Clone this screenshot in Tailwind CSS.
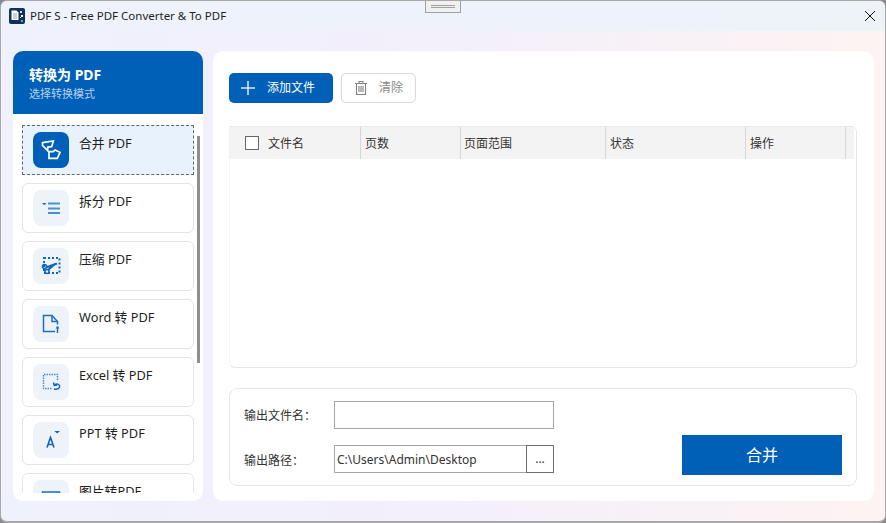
<!DOCTYPE html>
<html lang="en">
<head>
    <meta charset="UTF-8">
    <title>PDF S - Free PDF Converter &amp; To PDF</title>
    <script src="https://cdn.jsdelivr.net/npm/@tailwindcss/browser@4"></script>
</head>
<body class="w-[886px] h-[523px] overflow-hidden bg-[#8a8a8a] font-['Noto_Sans','Noto_Sans_CJK_SC',sans-serif] text-[#1f1f1f]">
<div class="relative w-[886px] h-[523px] flex flex-col overflow-hidden rounded-[7px] border border-[#a8a8a8] border-b-2 bg-gradient-to-r from-[#eff1fd] via-[#f3effb] to-[#fdf3f2]">

    <!-- Title bar -->
    <header class="h-[30px] flex items-center shrink-0 pl-[8px] pr-[10px] bg-gradient-to-r from-[#eef2fc] to-[#eef3f8]">
        <svg width="16" height="16" viewBox="0 0 16 16" class="mr-[5px]">
            <rect width="16" height="16" rx="2" fill="#12305c"/>
            <path d="M2.500 2.500h5l2 2V12h-7z" fill="#fff"/>
            <path d="M4 6h4M4 8h4M4 10h4" stroke="#8fa6c4" stroke-width="1"/>
            <rect x="11" y="3" width="2" height="2" fill="#cfe0f2"/>
            <rect x="12" y="7" width="2" height="2" fill="#fff"/>
            <rect x="11" y="9" width="1" height="1" fill="#cfe0f2"/>
            <rect x="12" y="12" width="2" height="2" fill="#54c27a"/>
        </svg>
        <span class="text-[11.500px] leading-none whitespace-nowrap">PDF S - Free PDF Converter &amp; To PDF</span>
        <svg width="10" height="10" viewBox="0 0 10 10" class="ml-auto" fill="none" stroke="#111" stroke-width="1"><path d="M0 0l10 10M10 0L0 10"/></svg>
    </header>

    <!-- Window handle -->
    <div class="absolute left-[424px] top-0 w-[36px] h-[12px] bg-[#f0f0f0] border border-t-0 border-[#a0a0a0] flex flex-col items-center justify-center gap-[1px]">
        <div class="w-[24px] h-px bg-[#a0a0a0]"></div>
        <div class="w-[24px] h-px bg-[#a0a0a0]"></div>
    </div>

    <div class="flex gap-[10px] pl-[12px] pt-[20px]">
        <!-- Sidebar -->
        <aside class="w-[190px] h-[450px] rounded-[10px] bg-white overflow-hidden shrink-0 pb-[8px] flex flex-col">
            <div class="h-[63px] shrink-0 bg-[#0060b8] pl-[16px] pt-[14px] text-white">
                <div class="text-[14px] leading-[20px] font-bold">转换为 PDF</div>
                <div class="text-[11px] leading-[17px] text-[#b4d0ec]">选择转换模式</div>
            </div>
            <div class="relative flex-1 overflow-hidden pt-[11px] pl-[9px] flex flex-col gap-[8px]">
                <div class="absolute left-[184px] top-[22px] w-[3px] h-[227px] bg-[#8f8f8f]"></div>

                <div class="w-[172px] h-[50px] shrink-0 flex gap-[10px] pl-[10px] pt-[6px] border border-dashed border-[#666] bg-[#e8f2fd]">
                    <div class="w-[36px] h-[36px] rounded-[8px] bg-[#0060b8] flex items-center justify-center">
                        <svg width="36" height="36" viewBox="0 0 36 36" fill="none" stroke="#fff" stroke-width="1.700">
                            <path d="M9.500 10.700L20.300 9 18.700 14.700 14.700 15V18.700L9.500 13.500z"/>
                            <path d="M16 19.700H20.300L22 18 27 20.300 24.300 26.300H16z"/>
                        </svg>
                    </div>
                    <div class="text-[12.800px] leading-[18px] mt-[2px] whitespace-nowrap">合并 PDF</div>
                </div>

                <div class="w-[172px] h-[50px] shrink-0 flex gap-[10px] pl-[10px] pt-[6px] border border-[#e4e4e4] rounded-[6px]">
                    <div class="w-[36px] h-[36px] rounded-[8px] bg-[#eef3fa] flex items-center justify-center">
                        <svg width="36" height="36" viewBox="0 0 36 36" fill="none" stroke="#4a8fd4" stroke-width="1.800">
                            <path d="M15 13.500h12M15 18.500h12M15 23h12"/>
                            <path d="M9 13h4.500l-2.200 2.300z" fill="#1b6fc2" stroke="none"/>
                        </svg>
                    </div>
                    <div class="text-[12.800px] leading-[18px] mt-[2px] whitespace-nowrap">拆分 PDF</div>
                </div>

                <div class="w-[172px] h-[50px] shrink-0 flex gap-[10px] pl-[10px] pt-[6px] border border-[#e4e4e4] rounded-[6px]">
                    <div class="w-[36px] h-[36px] rounded-[8px] bg-[#eef3fa] flex items-center justify-center">
                        <svg width="36" height="36" viewBox="0 0 36 36" fill="none" stroke="#0f67bd" stroke-width="2">
                            <rect x="11" y="10" width="15.500" height="15" stroke-dasharray="2 2"/>
                            <circle cx="11.500" cy="18.500" r="2" stroke-width="1.600"/>
                            <circle cx="14" cy="23.500" r="2" stroke-width="1.600"/>
                            <path d="M13 19.500l11-4M15 22l7-6" stroke-width="2"/>
                        </svg>
                    </div>
                    <div class="text-[12.800px] leading-[18px] mt-[2px] whitespace-nowrap">压缩 PDF</div>
                </div>

                <div class="w-[172px] h-[50px] shrink-0 flex gap-[10px] pl-[10px] pt-[6px] border border-[#e4e4e4] rounded-[6px]">
                    <div class="w-[36px] h-[36px] rounded-[8px] bg-[#eef3fa] flex items-center justify-center">
                        <svg width="36" height="36" viewBox="0 0 36 36" fill="none" stroke="#1b6fc2" stroke-width="1.500">
                            <path d="M22 25.500H10.500V9.500h8.500l5.500 6v3"/>
                            <path d="M19 9.500v6h5.500"/>
                            <path d="M24.500 27v-6.500" stroke-width="1.500"/>
                            <path d="M22.500 22.500h4l-2-2.500z" fill="#1b6fc2" stroke="none"/>
                        </svg>
                    </div>
                    <div class="text-[12.800px] leading-[18px] mt-[2px] whitespace-nowrap">Word 转 PDF</div>
                </div>

                <div class="w-[172px] h-[50px] shrink-0 flex gap-[10px] pl-[10px] pt-[6px] border border-[#e4e4e4] rounded-[6px]">
                    <div class="w-[36px] h-[36px] rounded-[8px] bg-[#eef3fa] flex items-center justify-center">
                        <svg width="36" height="36" viewBox="0 0 36 36" fill="none" stroke="#4a8fd4" stroke-width="1.500">
                            <path d="M24.500 16V10.500H10.500V24.500H19" stroke-dasharray="1.500 1"/>
                            <path d="M21 25c3.500.8 6-.8 5.600-3-.4-2-2.800-2.600-4.600-1.300M20.500 18.500l.7 3 3-.5" stroke="#0f67bd" stroke-width="1.500"/>
                        </svg>
                    </div>
                    <div class="text-[12.800px] leading-[18px] mt-[2px] whitespace-nowrap">Excel 转 PDF</div>
                </div>

                <div class="w-[172px] h-[50px] shrink-0 flex gap-[10px] pl-[10px] pt-[6px] border border-[#e4e4e4] rounded-[6px]">
                    <div class="w-[36px] h-[36px] rounded-[8px] bg-[#eef3fa] flex items-center justify-center">
                        <svg width="36" height="36" viewBox="0 0 36 36" fill="none" stroke="#0f67bd" stroke-width="1.600">
                            <path d="M14 25.500l3.500-10 3.500 10M15 22.500h5"/>
                            <path d="M21.300 9h5.700l-2.800 2.500z" fill="#0f67bd" stroke="none"/>
                        </svg>
                    </div>
                    <div class="text-[12.800px] leading-[18px] mt-[2px] whitespace-nowrap">PPT 转 PDF</div>
                </div>

                <div class="w-[172px] h-[50px] shrink-0 flex gap-[10px] pl-[10px] pt-[6px] border border-[#e4e4e4] rounded-[6px]">
                    <div class="w-[36px] h-[36px] rounded-[8px] bg-[#eef3fa] flex items-center justify-center">
                        <svg width="36" height="36" viewBox="0 0 36 36" fill="none" stroke="#1b6fc2" stroke-width="1.500"><rect x="9.500" y="12" width="17" height="14"/></svg>
                    </div>
                    <div class="text-[12.800px] leading-[18px] mt-[2px] whitespace-nowrap">图片转PDF</div>
                </div>
            </div>
        </aside>

        <!-- Main panel -->
        <main class="w-[661px] h-[450px] rounded-[10px] bg-white shrink-0 pl-[16px] pt-[22px]">
            <div class="flex gap-[8px]">
                <button class="w-[104px] h-[30px] rounded-[5px] bg-[#0060b8] text-white text-[12px] flex items-center pl-[12px] gap-[12px]">
                    <svg width="14" height="14" viewBox="0 0 14 14" fill="none" stroke="#dce9f6" stroke-width="1.500"><path d="M7 0v14M0 7h14"/></svg>
                    添加文件
                </button>
                <button class="w-[75px] h-[30px] rounded-[5px] border border-[#d9d9d9] text-[#8b8b8b] text-[12px] flex items-center pl-[13px] gap-[12px]">
                    <svg width="12" height="14" viewBox="0 0 12 14" fill="none" stroke="#808080" stroke-width="1.100"><path d="M0 2.500h12M4 2.500V.5h4v2M1.500 2.500v11h9v-11M4 5v6M6 5v6M8 5v6"/></svg>
                    清除
                </button>
            </div>

            <!-- File table -->
            <div class="mt-[23px] w-[628px] h-[242px] rounded-[6px] border-l border-r border-b border-l-[#f4f4f4] border-r-[#e6e6e6] border-b-[#e6e6e6]">
                <div class="h-[33px] bg-[#f3f3f3] border-t border-[#e8e8e8] flex text-[12px] text-[#333] leading-[34px] mr-[2px] -ml-px">
                    <div class="w-[132px] border-r border-[#d6d6d6] flex items-center pl-[16px] gap-[9px] pt-[1px]">
                        <span class="w-[14px] h-[14px] -mt-[1px] bg-white border border-[#666]"></span>文件名
                    </div>
                    <div class="w-[100px] border-r border-[#d6d6d6] pl-[4px]">页数</div>
                    <div class="w-[145px] border-r border-[#d6d6d6] pl-[3px]">页面范围</div>
                    <div class="w-[140px] border-r border-[#d6d6d6] pl-[4px]">状态</div>
                    <div class="w-[100px] border-r border-[#d6d6d6] pl-[4px]">操作</div>
                </div>
            </div>

            <!-- Output settings -->
            <div class="relative mt-[20px] w-[628px] h-[98px] rounded-[8px] border border-[#e6e6e6] pl-[14px] pt-[12px] text-[12px] text-[#333]">
                <div class="flex items-center h-[28px]">
                    <span class="w-[90px] pt-[2px]">输出文件名：</span>
                    <div class="w-[220px] h-[28px] border border-[#a6a6a6]"></div>
                </div>
                <div class="flex items-center h-[28px] mt-[16px]">
                    <span class="w-[90px] pt-[4px]">输出路径：</span>
                    <div class="w-[193px] h-[28px] border border-[#a6a6a6] pl-[2px] leading-[28px] text-[12px] whitespace-nowrap">C:\Users\Admin\Desktop</div>
                    <div class="w-[28px] h-[28px] -ml-px border border-[#6f6f6f] text-center leading-[26px]">...</div>
                </div>
                <button class="absolute left-[452px] top-[46px] w-[160px] h-[40px] bg-[#0060b8] text-white text-[16px]">合并</button>
            </div>
        </main>
    </div>
</div>
</body>
</html>
